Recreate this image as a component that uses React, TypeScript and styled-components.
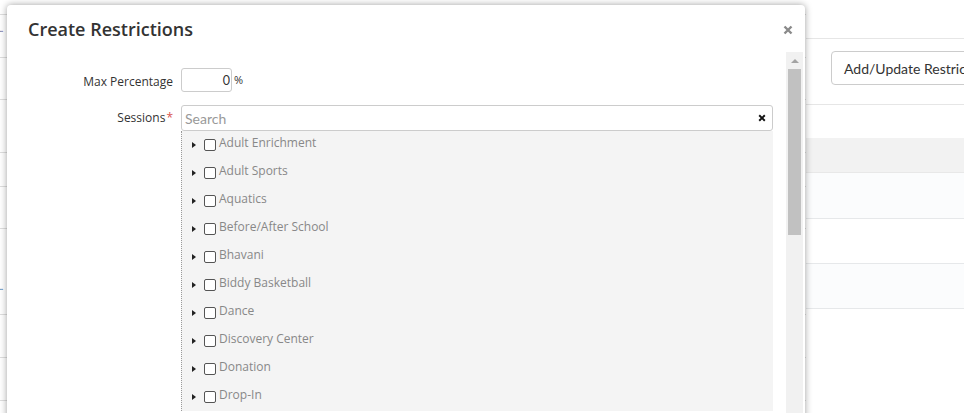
import React from 'react';
import styled, { createGlobalStyle } from 'styled-components';

const GlobalStyle = createGlobalStyle`
  html, body {
    margin: 0;
    padding: 0;
    background: #fff;
    overflow: hidden;
  }
  body {
    font-family: "Open Sans", "Liberation Sans", sans-serif;
  }
`;

const Page = styled.div`
  position: relative;
  display: flex;
  width: 964px;
  height: 413px;
  overflow: hidden;
  font-family: Lato, "Liberation Sans", sans-serif;
`;

const LeftPane = styled.div`
  width: 806px;
  flex-shrink: 0;
  padding-top: 14px;
`;

const LeftRow = styled.div<{ $h: number }>`
  height: ${(p) => p.$h}px;
  border-top: 1px solid #dedede;
  box-sizing: border-box;
  display: flex;
  align-items: flex-start;
`;

const Ellipsis = styled.span<{ $top: number; $color: string }>`
  margin-top: ${(p) => p.$top}px;
  margin-left: -1px;
  font-size: 9px;
  line-height: 4px;
  letter-spacing: -1px;
  color: ${(p) => p.$color};
`;

const RightPane = styled.div`
  flex: 1;
  padding-top: 38px;
`;

const Toolbar = styled.div`
  border-top: 1px solid #e6e6e6;
  border-bottom: 1px solid #e6e6e6;
  height: 67px;
  box-sizing: border-box;
  padding: 12px 0 0 25px;
`;

const ToolButton = styled.div`
  width: 180px;
  height: 34px;
  box-sizing: border-box;
  border: 1px solid #cccccc;
  border-radius: 4px;
  padding: 0 12px;
  display: flex;
  align-items: center;
  font-size: 14px;
  color: #333;
  white-space: nowrap;
`;

const Table = styled.div`
  margin-top: 33px;
`;

const TableHead = styled.div`
  height: 35px;
  background: #f2f2f2;
  border-bottom: 1px solid #e8e8e8;
  box-sizing: border-box;
`;

const TableRow = styled.div<{ $striped: boolean; $h: number }>`
  height: ${(p) => p.$h}px;
  background: ${(p) => (p.$striped ? '#fbfcfd' : '#fff')};
  border-bottom: 1px solid #e6e8ea;
  box-sizing: border-box;
`;

const Modal = styled.div`
  position: absolute;
  left: 7px;
  top: 5px;
  width: 798px;
  height: 440px;
  background: #fff;
  border-radius: 4px;
  box-shadow: 0 0 7px rgba(0, 0, 0, 0.38);
  display: flex;
  flex-direction: column;
  font-family: "Open Sans", "Liberation Sans", sans-serif;
`;

const ModalHeader = styled.div`
  height: 47px;
  box-sizing: border-box;
  padding: 12px 12px 0 21px;
  display: flex;
  justify-content: space-between;
  align-items: flex-start;
`;

const Title = styled.h4`
  margin: 0;
  font-size: 18px;
  line-height: 24px;
  font-weight: 600;
  color: #333;
`;

const CloseButton = styled.button`
  border: none;
  background: none;
  padding: 0;
  margin-top: 8px;
  width: 10px;
  height: 10px;
  display: flex;
  cursor: pointer;
`;

const ModalBody = styled.div`
  flex: 1;
  display: flex;
  padding-right: 2px;
`;

const Form = styled.div`
  flex: 1;
  padding-top: 16px;
  display: grid;
  grid-template-columns: 166px 1fr;
  column-gap: 8px;
  row-gap: 13px;
  align-content: start;
  margin-right: 13px;
`;

const Label = styled.label`
  font-size: 12px;
  color: #333;
  text-align: right;
  align-self: start;
`;

const MaxLabel = styled(Label)`
  line-height: 16px;
  padding-top: 6px;
`;

const SessionsLabel = styled(Label)`
  line-height: 26px;
`;

const Required = styled.span`
  color: #d9534f;
  margin-left: 1px;
`;

const InlineField = styled.div`
  display: flex;
  align-items: center;
  height: 24px;
`;

const NumberInput = styled.input`
  width: 51px;
  height: 24px;
  box-sizing: border-box;
  border: 1px solid #cccccc;
  border-radius: 3px;
  padding: 0 1px 0 4px;
  text-align: right;
  font-family: Lato, "Liberation Sans", sans-serif;
  font-size: 12.5px;
  color: #333;
  outline: none;
`;

const Unit = styled.span`
  font-size: 11px;
  line-height: 14px;
  color: #333;
  margin-left: 2px;
  margin-bottom: 1px;
`;

const Picker = styled.div`
  display: flex;
  flex-direction: column;
`;

const SearchBox = styled.div`
  height: 26px;
  box-sizing: border-box;
  border: 1px solid #cccccc;
  border-radius: 3px;
  display: flex;
  align-items: center;
  padding: 0 6px 0 3px;
`;

const SearchInput = styled.input`
  flex: 1;
  border: none;
  outline: none;
  padding: 0;
  font-family: Lato, "Liberation Sans", sans-serif;
  font-size: 14px;
  color: #333;
  background: transparent;
  &::placeholder {
    color: #999;
  }
`;

const ClearButton = styled.button`
  border: none;
  background: none;
  padding: 0;
  width: 8px;
  height: 8px;
  display: flex;
  cursor: pointer;
`;

const Tree = styled.ul`
  list-style: none;
  margin: 0;
  padding: 0;
  background: #f4f4f4;
  border-left: 1px dotted #9a9a9a;
`;

const TreeItem = styled.li`
  height: 28px;
  display: flex;
  align-items: center;
  padding-left: 10px;
`;

const Caret = styled.span`
  width: 0;
  height: 0;
  border-top: 3.5px solid transparent;
  border-bottom: 3.5px solid transparent;
  border-left: 4.5px solid #222;
  margin-right: 8px;
`;

const Box = styled.span`
  width: 12px;
  height: 12px;
  box-sizing: border-box;
  border: 1px solid #555;
  border-radius: 2px;
  background: #fff;
  margin-right: 3px;
`;

const ItemText = styled.span`
  font-size: 12px;
  color: #888;
  padding-bottom: 4px;
  line-height: 16px;
`;

const ScrollTrack = styled.div`
  width: 17px;
  background: #f1f1f1;
  display: flex;
  flex-direction: column;
  align-items: center;
`;

const ScrollArrow = styled.span`
  margin-top: 7px;
  width: 0;
  height: 0;
  border-left: 4px solid transparent;
  border-right: 4px solid transparent;
  border-bottom: 4px solid #a3a3a3;
`;

const ScrollThumb = styled.div`
  margin-top: 6px;
  width: 13px;
  height: 166px;
  background: #c1c1c1;
`;

const Cross = ({ size, color }: { size: number; color: string }) => (
  <svg width={size} height={size} viewBox="0 0 10 10">
    <path d="M1.5 1.5 L8.5 8.5 M8.5 1.5 L1.5 8.5" stroke={color} strokeWidth="2.4" strokeLinecap="butt" />
  </svg>
);

const leftRows = [43, 42, 53, 34, 42, 86, 43, 43, 43];
const sessions = [
  'Adult Enrichment',
  'Adult Sports',
  'Aquatics',
  'Before/After School',
  'Bhavani',
  'Biddy Basketball',
  'Dance',
  'Discovery Center',
  'Donation',
  'Drop-In',
];

export default function App() {
  return (
    <>
      <GlobalStyle />
      <Page>
        <LeftPane>
          {leftRows.map((h, i) => (
            <LeftRow key={i} $h={h}>
              {i === 0 && <Ellipsis $top={12} $color="#7a6f9e">...</Ellipsis>}
              {i === 5 && <Ellipsis $top={56} $color="#5d86b5">...</Ellipsis>}
            </LeftRow>
          ))}
        </LeftPane>
        <RightPane>
          <Toolbar>
            <ToolButton>Add/Update Restrictions</ToolButton>
          </Toolbar>
          <Table>
            <TableHead />
            <TableRow $striped $h={46} />
            <TableRow $striped={false} $h={45} />
            <TableRow $striped $h={45} />
          </Table>
        </RightPane>

        <Modal>
          <ModalHeader>
            <Title>Create Restrictions</Title>
            <CloseButton aria-label="Close">
              <Cross size={10} color="#8a8a8a" />
            </CloseButton>
          </ModalHeader>
          <ModalBody>
            <Form>
              <MaxLabel>Max Percentage</MaxLabel>
              <InlineField>
                <NumberInput defaultValue="0" />
                <Unit>%</Unit>
              </InlineField>
              <SessionsLabel>
                Sessions<Required>*</Required>
              </SessionsLabel>
              <Picker>
                <SearchBox>
                  <SearchInput placeholder="Search" />
                  <ClearButton aria-label="Clear">
                    <Cross size={8} color="#111" />
                  </ClearButton>
                </SearchBox>
                <Tree>
                  {sessions.map((s) => (
                    <TreeItem key={s}>
                      <Caret />
                      <Box />
                      <ItemText>{s}</ItemText>
                    </TreeItem>
                  ))}
                </Tree>
              </Picker>
            </Form>
            <ScrollTrack>
              <ScrollArrow />
              <ScrollThumb />
            </ScrollTrack>
          </ModalBody>
        </Modal>
      </Page>
    </>
  );
}
